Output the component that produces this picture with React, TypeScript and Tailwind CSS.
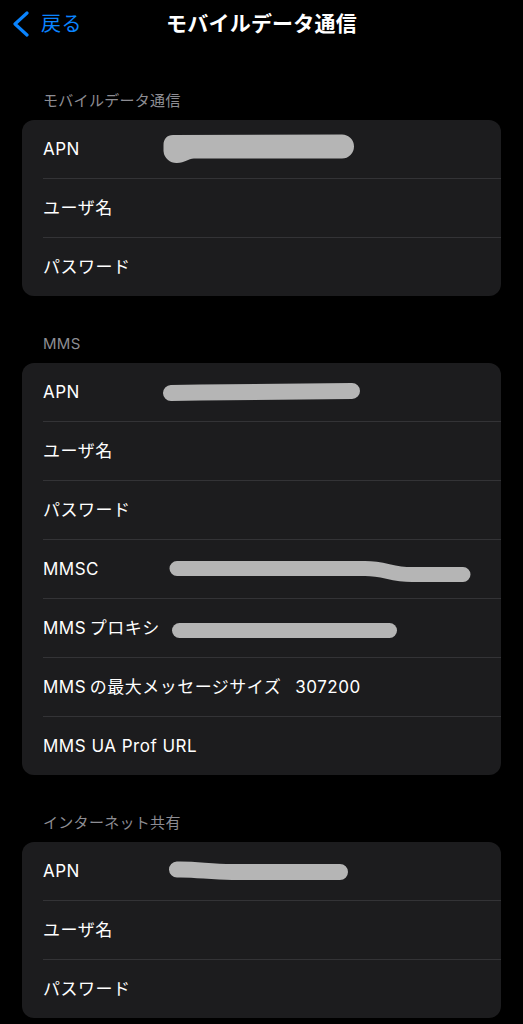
import React from "react";

type Row = { label: string; value?: string; blob?: React.ReactNode };

const Blob = ({ children }: { children: React.ReactNode }) => (
  <svg
    className="absolute left-0 top-0"
    width={479}
    height={58}
    viewBox="0 0 479 58"
    fill="none"
  >
    <g stroke="#b5b5b5" strokeLinecap="round" strokeLinejoin="round" fill="none">
      {children}
    </g>
  </svg>
);

const sections: { header: string; rows: Row[] }[] = [
  {
    header: "モバイルデータ通信",
    rows: [
      {
        label: "APN",
        blob: (
          <Blob>
            <path
              d="M151 15 L320 14.5 A12 12 0 0 1 320 38.5 L172 38.5 C166 38.5 163 43 155 43 A13 13 0 0 1 141.5 31 L141.5 25 C141.5 19 145 15 151 15 Z"
              fill="#b5b5b5"
              stroke="none"
            />
          </Blob>
        ),
      },
      { label: "ユーザ名" },
      { label: "パスワード" },
    ],
  },
  {
    header: "MMS",
    rows: [
      {
        label: "APN",
        blob: (
          <Blob>
            <path d="M149 30 L178 29.5 L330 28" strokeWidth={16} />
          </Blob>
        ),
      },
      { label: "ユーザ名" },
      { label: "パスワード" },
      {
        label: "MMSC",
        blob: (
          <Blob>
            <path d="M155 28.5 L343 28.5 C364 28.5 368 34.5 390 34.5 L441 34.5" strokeWidth={15} />
          </Blob>
        ),
      },
      {
        label: "MMS\u2009プロキシ",
        blob: (
          <Blob>
            <path d="M157.5 31.5 L367.5 31.5" strokeWidth={15} />
          </Blob>
        ),
      },
      { label: "MMS\u2009の最大メッセージサイズ", value: "307200" },
      { label: "MMS UA Prof URL" },
    ],
  },
  {
    header: "インターネット共有",
    rows: [
      {
        label: "APN",
        blob: (
          <Blob>
            <path d="M155 27.5 C176 27 186 30 210 30 L318 30" strokeWidth={16} />
          </Blob>
        ),
      },
      { label: "ユーザ名" },
      { label: "パスワード" },
    ],
  },
];

export default function App() {
  return (
    <div className="min-h-[1024px] w-[523px] bg-black text-white font-[Inter,'Noto_Sans_CJK_JP',sans-serif] overflow-hidden">
      <div className="relative flex h-[48px] items-center">
        <div className="flex items-center pl-[12px]">
          <svg width={18} height={26} viewBox="0 0 18 26" fill="none">
            <path
              d="M15 2 L3 13 L15 24"
              stroke="#0a84ff"
              strokeWidth={3.2}
              strokeLinecap="round"
              strokeLinejoin="round"
            />
          </svg>
          <span className="ml-[11px] text-[20px] leading-[24px] tracking-[0.5px] text-[#0a84ff]">戻る</span>
        </div>
        <div className="absolute left-0 right-0 top-0 flex h-[48px] items-center justify-center pointer-events-none">
          <span className="text-[21px] font-semibold leading-[26px] tracking-[0.2px]">
            モバイルデータ通信
          </span>
        </div>
      </div>

      <div className="pt-[44px]">
        {sections.map((s, si) => (
          <div key={si} className={si > 0 ? "mt-[39px]" : ""}>
            <div className="pl-[43px] pb-[10px] text-[15px] leading-[18px] tracking-[0.3px] text-[#8d8d93]">
              {s.header}
            </div>
            <div className="mx-[22px] overflow-hidden rounded-[12px] bg-[#1c1c1e]">
              {s.rows.map((r, ri) => (
                <React.Fragment key={ri}>
                  {ri > 0 && <div className="ml-[21px] h-px bg-[#333336]" />}
                  <div className="relative flex h-[58px] items-center pl-[21px] text-[17px] leading-[22px] tracking-[0.5px]">
                    <span>{r.label}</span>
                    {r.value && <span className="ml-[14px]">{r.value}</span>}
                    {r.blob}
                  </div>
                </React.Fragment>
              ))}
            </div>
          </div>
        ))}
      </div>
    </div>
  );
}
